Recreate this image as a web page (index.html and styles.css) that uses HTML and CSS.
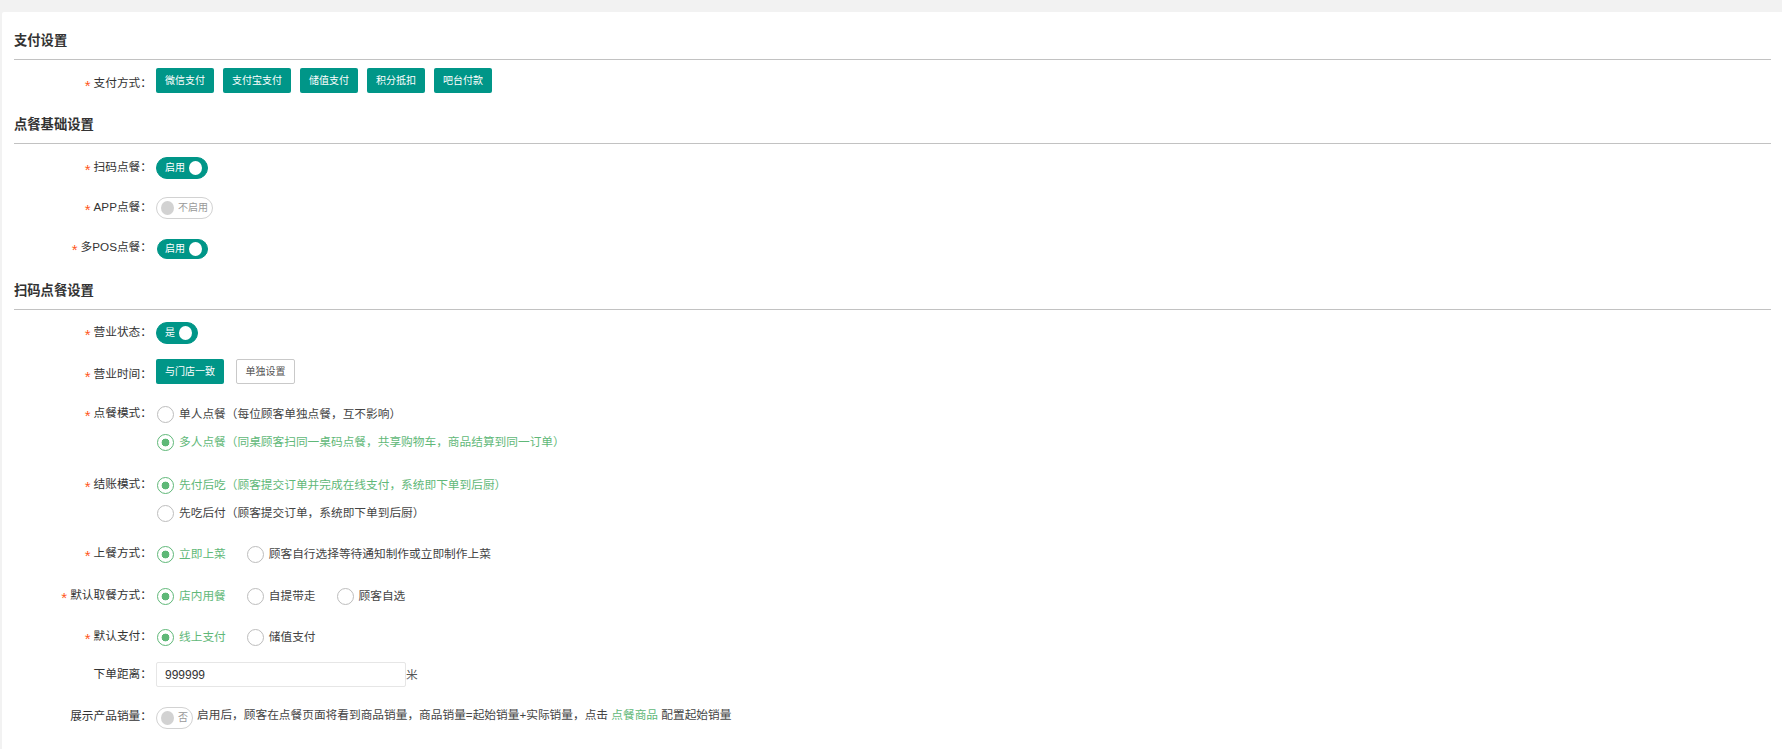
FILE: index.html
```html
<!DOCTYPE html>
<html lang="zh-CN">
<head>
<meta charset="utf-8">
<title>点餐设置</title>
<link rel="stylesheet" href="styles.css">
</head>
<body>
<main class="card">
  <h2 class="title first">支付设置</h2>
  <div class="row m8 btn-row">
    <label class="label"><i>*</i>支付方式&#xFF1A;</label>
    <div class="btns">
      <span class="btn">微信支付</span><span class="btn">支付宝支付</span><span class="btn">储值支付</span><span class="btn">积分抵扣</span><span class="btn">吧台付款</span>
    </div>
  </div>

  <h2 class="title">点餐基础设置</h2>
  <div class="row m13"><label class="label"><i>*</i>扫码点餐&#xFF1A;</label><span class="switch on"><em>启用</em><b></b></span></div>
  <div class="row m18"><label class="label"><i>*</i>APP点餐&#xFF1A;</label><span class="switch off"><b></b><em>不启用</em></span></div>
  <div class="row m19"><label class="label"><i>*</i>多POS点餐&#xFF1A;</label><span class="switch on slim"><em>启用</em><b></b></span></div>

  <h2 class="title">扫码点餐设置</h2>
  <div class="row m12"><label class="label"><i>*</i>营业状态&#xFF1A;</label><span class="switch on"><em>是</em><b></b></span></div>
  <div class="row m15 btn-row">
    <label class="label"><i>*</i>营业时间&#xFF1A;</label>
    <div class="btns wide"><span class="btn">与门店一致</span><span class="btn plain">单独设置</span></div>
  </div>
  <div class="row top m16">
    <label class="label"><i>*</i>点餐模式&#xFF1A;</label>
    <div class="stack">
      <span class="radio">单人点餐&#xFF08;每位顾客单独点餐&#xFF0C;互不影响&#xFF09;</span>
      <span class="radio checked">多人点餐&#xFF08;同桌顾客扫同一桌码点餐&#xFF0C;共享购物车&#xFF0C;商品结算到同一订单&#xFF09;</span>
    </div>
  </div>
  <div class="row top m15">
    <label class="label"><i>*</i>结账模式&#xFF1A;</label>
    <div class="stack">
      <span class="radio checked">先付后吃&#xFF08;顾客提交订单并完成在线支付&#xFF0C;系统即下单到后厨&#xFF09;</span>
      <span class="radio">先吃后付&#xFF08;顾客提交订单&#xFF0C;系统即下单到后厨&#xFF09;</span>
    </div>
  </div>
  <div class="row top m13">
    <label class="label"><i>*</i>上餐方式&#xFF1A;</label>
    <div class="inline"><span class="radio checked">立即上菜</span><span class="radio">顾客自行选择等待通知制作或立即制作上菜</span></div>
  </div>
  <div class="row top m14">
    <label class="label"><i>*</i>默认取餐方式&#xFF1A;</label>
    <div class="inline"><span class="radio checked">店内用餐</span><span class="radio">自提带走</span><span class="radio">顾客自选</span></div>
  </div>
  <div class="row top m13">
    <label class="label"><i>*</i>默认支付&#xFF1A;</label>
    <div class="inline"><span class="radio checked">线上支付</span><span class="radio">储值支付</span></div>
  </div>
  <div class="row m11">
    <label class="label">下单距离&#xFF1A;</label>
    <input class="input" type="text" value="999999"><span class="unit">米</span>
  </div>
  <div class="row m20">
    <label class="label raised">展示产品销量&#xFF1A;</label>
    <span class="switch off"><b></b><em>否</em></span>
    <span class="hint">启用后&#xFF0C;顾客在点餐页面将看到商品销量&#xFF0C;商品销量=起始销量+实际销量&#xFF0C;点击 <a href="#">点餐商品</a> 配置起始销量</span>
  </div>
</main>
</body>
</html>
```
FILE: styles.css
```css
* { box-sizing: border-box; }
html, body { height: 100%; }
body {
  margin: 0;
  padding: 12px 0 0 2px;
  background: #f2f2f2;
  color: #333;
  font: 11.7px/18px "Liberation Sans", "Noto Sans CJK SC", sans-serif;
  overflow: hidden;
}
.card {
  height: 737px;
  padding: 18px 11px 0 12px;
  background: #fff;
  border-radius: 2px 0 0 0;
}
.title {
  margin: 21px 0 0;
  padding-bottom: 7px;
  border-bottom: 1px solid #c2c2c2;
  font-size: 13.3px;
  line-height: 22px;
  font-weight: 700;
  color: #333;
}
.title.first { margin-top: 0; }
.row { display: flex; align-items: center; }
.row.top { align-items: flex-start; }
.row.top .label { padding: 0; line-height: 25px; }
.btn-row .label { padding: 5px 0 0; }
.m8 { margin-top: 8px; }
.m11 { margin-top: 11px; }
.m12 { margin-top: 12px; }
.m13 { margin-top: 13px; }
.m14 { margin-top: 14px; }
.m15 { margin-top: 15px; }
.m16 { margin-top: 16px; }
.m18 { margin-top: 18px; }
.m19 { margin-top: 19px; }
.m20 { margin-top: 20px; }
.label {
  flex: none;
  width: 138px;
  margin-right: 4px;
  padding-bottom: 2px;
  text-align: right;
  white-space: nowrap;
  line-height: 18px;
}
.label.raised { padding-bottom: 4px; }
.label i {
  margin-right: 3px;
  color: #ff5722;
  font: 15px/1 "Liberation Sans", sans-serif;
  vertical-align: -4px;
}
.btns { display: flex; gap: 9px; }
.btns.wide { gap: 12px; }
.btn {
  height: 25px;
  padding: 0 9px;
  border-radius: 2px;
  background: #009688;
  color: #fff;
  font-size: 10px;
  line-height: 25px;
  white-space: nowrap;
}
.btn.plain {
  padding: 0 8.5px;
  border: 1px solid #c9c9c9;
  background: #fff;
  color: #555;
  line-height: 23px;
}
.switch {
  display: inline-flex;
  flex: none;
  align-items: center;
  gap: 4px;
  height: 22px;
  border: 1px solid #d2d2d2;
  border-radius: 11px;
  font-size: 10px;
  font-style: normal;
  line-height: 18px;
}
.switch em { font-style: normal; white-space: nowrap; }
.switch b { width: 13px; height: 14px; border-radius: 50%; }
.switch.on {
  padding: 0 5px 0 8px;
  border-color: #009688;
  background: #009688;
  color: #fff;
}
.switch.on b { background: #fff; }
.switch.off {
  padding: 0 4px;
  background: #fff;
  color: #999;
}
.switch.off b { background: #d2d2d2; }
.switch.slim { height: 20px; margin-left: 1px; padding: 0 5px 0 7px; }
.stack { display: flex; flex-direction: column; padding-left: 1px; }
.inline { display: flex; gap: 21px; padding-left: 1px; }
.radio {
  display: flex;
  align-items: center;
  gap: 5px;
  height: 28px;
  color: #444;
  white-space: nowrap;
}
.radio::before {
  content: "";
  flex: none;
  width: 15px;
  height: 15px;
  border: 1.5px solid #bdbdbd;
  border-radius: 50%;
  background: #fff;
}
.radio.checked { color: #5fb878; }
.radio.checked::before {
  border-color: #5fb878;
  background: radial-gradient(circle, #5fb878 0 3.6px, #fff 4.2px);
}
.input {
  width: 250px;
  height: 25px;
  padding: 0 8px;
  border: 1px solid #e6e6e6;
  border-radius: 2px;
  color: #333;
  font: 12px "Liberation Sans", sans-serif;
  outline: none;
}
.unit { color: #555; }
.hint {
  margin-left: 4px;
  padding-bottom: 6px;
  color: #444;
  line-height: 16px;
  white-space: nowrap;
}
.hint a { color: #5fb878; text-decoration: none; }
```
